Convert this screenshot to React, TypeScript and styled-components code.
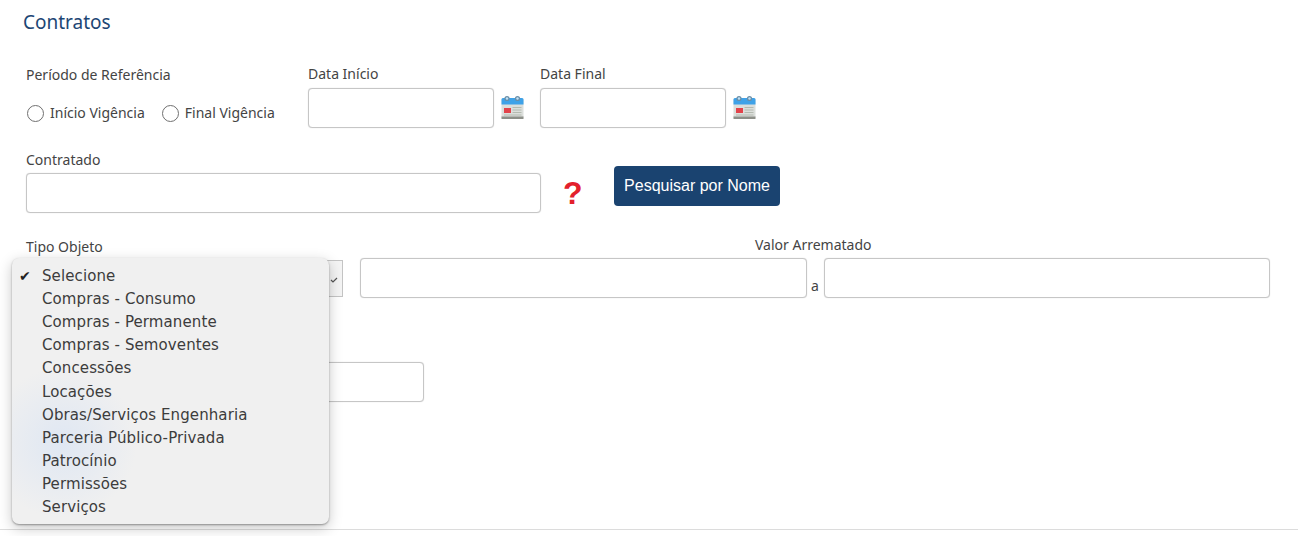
import React from 'react'
import styled, { createGlobalStyle } from 'styled-components'

const MENU_OPTIONS = [
  'Selecione',
  'Compras - Consumo',
  'Compras - Permanente',
  'Compras - Semoventes',
  'Concessões',
  'Locações',
  'Obras/Serviços Engenharia',
  'Parceria Público-Privada',
  'Patrocínio',
  'Permissões',
  'Serviços',
]

const GlobalStyle = createGlobalStyle`
  html, body {
    margin: 0;
    background: #fff;
  }
`

const CalendarIcon: React.FC = () =>
  <IconSvg viewBox="0 0 23 24" width="23" height="24">
    <rect x="0.5" y="3" width="22" height="20.5" rx="1.5" fill="#dcdfdc" />
    <rect x="0.5" y="21.5" width="22" height="2.5" fill="#8d9089" />
    <path d="M0.5 4.5a1.5 1.5 0 0 1 1.5-1.5h19a1.5 1.5 0 0 1 1.5 1.5V9.5H0.5z" fill="#3fa2e8" />
    <circle cx="6" cy="3.5" r="2.6" fill="#6a8fa8" />
    <circle cx="16.5" cy="3.5" r="2.6" fill="#6a8fa8" />
    <circle cx="6" cy="3.5" r="1.2" fill="#bfe0f5" />
    <circle cx="16.5" cy="3.5" r="1.2" fill="#bfe0f5" />
    <rect x="3" y="13" width="7" height="5" fill="#e2434b" />
    <path d="M11.5 12.5h9M11.5 15h9M11.5 17.5h9M3 20h17.5" stroke="#b4bab0" strokeWidth="1" />
  </IconSvg>

const App: React.FC = () =>
  <>
    <GlobalStyle />
    <Page>
      <Title>Contratos</Title>

      <PeriodRow>
        <PeriodField>
          <Label>Período de Referência</Label>
          <RadioGroup>
            <RadioOption><RadioCircle />Início Vigência</RadioOption>
            <RadioOption><RadioCircle />Final Vigência</RadioOption>
          </RadioGroup>
        </PeriodField>
        <DateField>
          <Label>Data Início</Label>
          <DateControl>
            <TextBox $width={186} />
            <CalendarIcon />
          </DateControl>
        </DateField>
        <DateField>
          <Label>Data Final</Label>
          <DateControl>
            <TextBox $width={186} />
            <CalendarIcon />
          </DateControl>
        </DateField>
      </PeriodRow>

      <ContractorRow>
        <Field>
          <Label>Contratado</Label>
          <TextBox $width={515} />
        </Field>
        <HelpMark>?</HelpMark>
        <SearchButton>Pesquisar por Nome</SearchButton>
      </ContractorRow>

      <ObjectRow>
        <ObjectField>
          <Label>Tipo Objeto</Label>
          <SelectBox>
            <SelectChevron viewBox="0 0 8 6" width="8" height="6">
              <path d="M1 3l2 2 4-4" fill="none" stroke="#555" strokeWidth="1.2" />
            </SelectChevron>
            <Menu>
              {MENU_OPTIONS.map((option, index) =>
                <MenuItem key={option}>
                  <MenuCheck>{index === 0 ? '✔' : ''}</MenuCheck>
                  {option}
                </MenuItem>
              )}
            </Menu>
          </SelectBox>
        </ObjectField>
        <ValueField>
          <ValueLabel>Valor Arrematado</ValueLabel>
          <ValueControls>
            <TextBox $width={447} />
            <RangeWord>a</RangeWord>
            <TextBox $width={446} />
          </ValueControls>
        </ValueField>
      </ObjectRow>

      <LowerRow>
        <TextBox $width={398} />
      </LowerRow>

      <FooterLine />
    </Page>
  </>

const Page = styled.div`
  display: flex;
  flex-direction: column;
  height: 536px;
  overflow: hidden;
  font-family: "Noto Sans", sans-serif;
  color: #444;
`

const Title = styled.h1`
  margin: 11px 0 0 23px;
  font-size: 19px;
  font-weight: 400;
  line-height: 22px;
  color: #1d4674;
`

const Label = styled.label`
  display: block;
  font-size: 14px;
  line-height: 16px;
`

const Field = styled.div`
  display: flex;
  flex-direction: column;
  gap: 5px;
`

const TextBox = styled.div<{ $width: number }>`
  box-sizing: border-box;
  flex: none;
  width: ${({ $width }) => $width}px;
  height: 40px;
  background: #fff;
  border: 1px solid #c6c6c6;
  border-radius: 4px;
  box-shadow: 0 0 1px rgba(0, 0, 0, 0.2);
`

const PeriodRow = styled.div`
  display: flex;
  margin: 33px 0 0 26px;
`

const PeriodField = styled.div`
  width: 282px;
  padding-top: 1px;
`

const RadioGroup = styled.div`
  display: flex;
  gap: 17px;
  margin: 21px 0 0 1px;
`

const RadioOption = styled.span`
  display: flex;
  align-items: center;
  gap: 6px;
  font-size: 14px;
  line-height: 18px;
`

const RadioCircle = styled.span`
  box-sizing: border-box;
  width: 17px;
  height: 17px;
  border: 1px solid #707070;
  border-radius: 50%;
  background: #fff;
`

const DateField = styled.div`
  display: flex;
  flex-direction: column;
  gap: 6px;
  width: 232px;
`

const DateControl = styled.div`
  display: flex;
  align-items: flex-start;
  gap: 7px;
`

const IconSvg = styled.svg`
  flex: none;
  margin-top: 7px;
`

const ContractorRow = styled.div`
  display: flex;
  align-items: flex-start;
  margin: 24px 0 0 26px;
`

const HelpMark = styled.span`
  margin: 26px 0 0 22px;
  width: 51px;
  font-family: "Liberation Sans", sans-serif;
  font-size: 32px;
  font-weight: 700;
  line-height: 30px;
  color: #e3202c;
`

const SearchButton = styled.button`
  box-sizing: border-box;
  width: 166px;
  height: 40px;
  margin-top: 14px;
  padding: 0;
  border: none;
  border-radius: 4px;
  background: #1a4370;
  color: #fff;
  font-family: "Liberation Sans", sans-serif;
  font-size: 16px;
`

const ObjectRow = styled.div`
  display: flex;
  margin: 26px 0 0 26px;
`

const ObjectField = styled.div`
  width: 334px;
`

const SelectBox = styled.div`
  position: relative;
  box-sizing: border-box;
  width: 317px;
  height: 37px;
  margin-top: 5px;
  border: 1px solid #c4c4c4;
  background: #f4f4f4;
`

const SelectChevron = styled.svg`
  position: absolute;
  right: 4px;
  top: 16px;
`

const Menu = styled.ul`
  position: absolute;
  left: -15px;
  top: -3px;
  z-index: 2;
  box-sizing: border-box;
  width: 317px;
  height: 266px;
  margin: 0;
  padding: 6.5px 0 0;
  list-style: none;
  border-radius: 7px;
  background:
    radial-gradient(circle at 50px 185px, rgba(214, 226, 244, 0.65), rgba(240, 240, 240, 0) 75px),
    #f0f0f0;
  box-shadow: 0 1px 2px rgba(0, 0, 0, 0.35), 0 4px 14px rgba(0, 0, 0, 0.22);
`

const MenuItem = styled.li`
  display: flex;
  height: 23.1px;
  align-items: center;
  font-family: "DejaVu Sans", sans-serif;
  font-size: 15px;
  letter-spacing: 0.1px;
  color: #3c3c3c;
`

const MenuCheck = styled.span`
  flex: none;
  width: 30px;
  padding-left: 7px;
  box-sizing: border-box;
  font-size: 14px;
  color: #222;
`

const ValueField = styled.div`
  position: relative;
  display: flex;
  flex-direction: column;
  gap: 5px;
  margin-top: -2px;
`

const ValueLabel = styled(Label)`
  margin-left: 395px;
`

const ValueControls = styled.div`
  display: flex;
  align-items: flex-end;
`

const RangeWord = styled.span`
  width: 17px;
  margin-bottom: 4px;
  padding-left: 4px;
  box-sizing: border-box;
  font-size: 14px;
  line-height: 16px;
`

const LowerRow = styled.div`
  display: flex;
  margin: 64px 0 0 26px;
`

const FooterLine = styled.div`
  height: 1px;
  margin-top: 127px;
  background: #dcdcdc;
`

export default App
